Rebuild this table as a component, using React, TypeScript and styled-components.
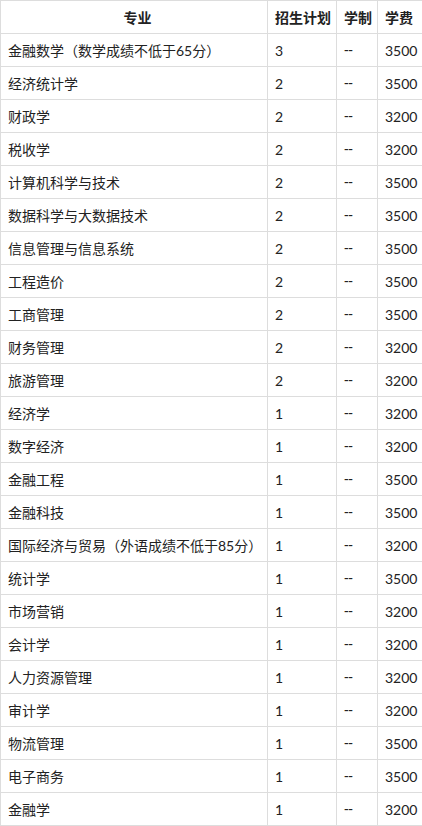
import React from "react";
import styled, { createGlobalStyle } from "styled-components";

interface Major {
  name: string;
  plan: number;
  years: string;
  fee: number;
}

const majors: Major[] = [
  { name: "金融数学（数学成绩不低于65分）", plan: 3, years: "--", fee: 3500 },
  { name: "经济统计学", plan: 2, years: "--", fee: 3500 },
  { name: "财政学", plan: 2, years: "--", fee: 3200 },
  { name: "税收学", plan: 2, years: "--", fee: 3200 },
  { name: "计算机科学与技术", plan: 2, years: "--", fee: 3500 },
  { name: "数据科学与大数据技术", plan: 2, years: "--", fee: 3500 },
  { name: "信息管理与信息系统", plan: 2, years: "--", fee: 3500 },
  { name: "工程造价", plan: 2, years: "--", fee: 3500 },
  { name: "工商管理", plan: 2, years: "--", fee: 3500 },
  { name: "财务管理", plan: 2, years: "--", fee: 3200 },
  { name: "旅游管理", plan: 2, years: "--", fee: 3200 },
  { name: "经济学", plan: 1, years: "--", fee: 3200 },
  { name: "数字经济", plan: 1, years: "--", fee: 3200 },
  { name: "金融工程", plan: 1, years: "--", fee: 3500 },
  { name: "金融科技", plan: 1, years: "--", fee: 3500 },
  { name: "国际经济与贸易（外语成绩不低于85分）", plan: 1, years: "--", fee: 3200 },
  { name: "统计学", plan: 1, years: "--", fee: 3500 },
  { name: "市场营销", plan: 1, years: "--", fee: 3200 },
  { name: "会计学", plan: 1, years: "--", fee: 3200 },
  { name: "人力资源管理", plan: 1, years: "--", fee: 3200 },
  { name: "审计学", plan: 1, years: "--", fee: 3200 },
  { name: "物流管理", plan: 1, years: "--", fee: 3500 },
  { name: "电子商务", plan: 1, years: "--", fee: 3500 },
  { name: "金融学", plan: 1, years: "--", fee: 3200 },
];

const GlobalStyle = createGlobalStyle`
  body {
    margin: 0;
    background: #ffffff;
    font-family: Lato, "Noto Sans CJK SC", sans-serif;
    color: #222222;
  }
`;

const Table = styled.table`
  width: 422px;
  border-collapse: collapse;
  table-layout: fixed;
  font-size: 14px;
`;

const HeadCell = styled.th<{ $width: number; $center?: boolean }>`
  box-sizing: border-box;
  width: ${(props) => props.$width}px;
  height: 33px;
  padding: 0 0 0 7px;
  border: 1px solid #dddddd;
  font-weight: bold;
  text-align: ${(props) => (props.$center ? "center" : "left")};
  white-space: nowrap;
`;

const Cell = styled.td`
  box-sizing: border-box;
  height: 33px;
  padding: 0 0 0 7px;
  border: 1px solid #dddddd;
  white-space: nowrap;
  overflow: hidden;
`;

const DashCell = styled(Cell)`
  font-family: "Liberation Sans", sans-serif;
  letter-spacing: -0.5px;
`;

export default function App() {
  return (
    <>
      <GlobalStyle />
      <Table>
        <thead>
          <tr>
            <HeadCell $width={267} $center>
              专业
            </HeadCell>
            <HeadCell $width={69}>招生计划</HeadCell>
            <HeadCell $width={41}>学制</HeadCell>
            <HeadCell $width={45}>学费</HeadCell>
          </tr>
        </thead>
        <tbody>
          {majors.map((m) => (
            <tr key={m.name}>
              <Cell>{m.name}</Cell>
              <Cell>{m.plan}</Cell>
              <DashCell>{m.years}</DashCell>
              <Cell>{m.fee}</Cell>
            </tr>
          ))}
        </tbody>
      </Table>
    </>
  );
}
